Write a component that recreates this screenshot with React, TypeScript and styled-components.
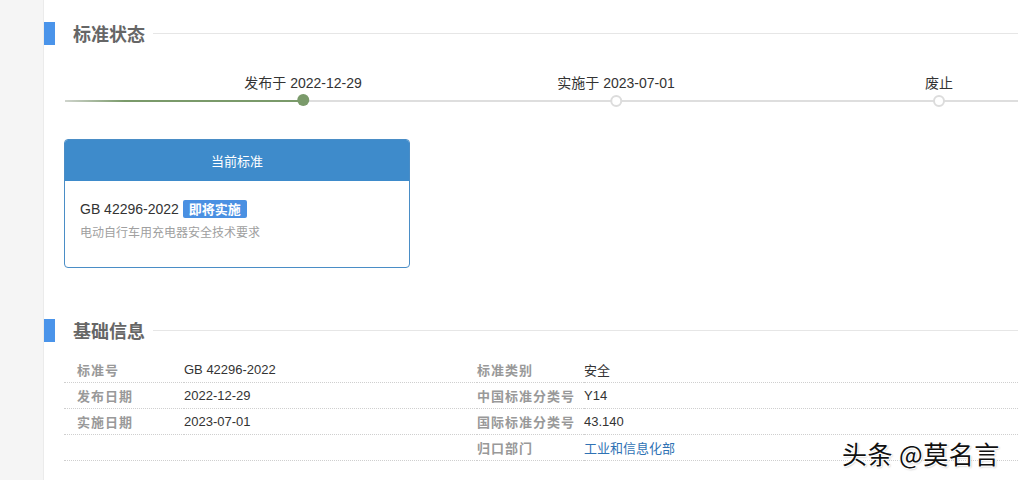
import React from 'react';
import styled, { createGlobalStyle } from 'styled-components';

const GlobalStyle = createGlobalStyle`
    html, body {
        margin: 0;
        padding: 0;
        background: #fff;
    }
    body {
        font-family: 'Liberation Sans', 'Noto Sans CJK SC', sans-serif;
        color: #333;
    }
`;

const Page = styled.div`
    display: flex;
    width: 1018px;
    height: 480px;
    overflow: hidden;
    position: relative;
`;

const Sidebar = styled.div`
    width: 43px;
    flex-shrink: 0;
    background: #f5f5f5;
    border-right: 1px solid #ebebeb;
`;

const Main = styled.div`
    flex: 1;
    min-width: 0;
    display: flex;
    flex-direction: column;
`;

const SectionHeader = styled.div<{ $top: number }>`
    display: flex;
    align-items: center;
    height: 23px;
    margin-top: ${(p) => p.$top}px;
`;

const SectionBar = styled.div`
    width: 11px;
    height: 23px;
    background: #4a94ea;
`;

const SectionTitle = styled.h2`
    margin: 0 0 0 18px;
    font-size: 18px;
    font-weight: 700;
    color: #666;
    font-family: 'Noto Sans CJK SC', sans-serif;
    line-height: 23px;
`;

const SectionLine = styled.div`
    flex: 1;
    height: 1px;
    background: #e6e6e6;
    margin-left: 8px;
`;

const Timeline = styled.div`
    position: relative;
    margin: 26px 0 0 20px;
    height: 40px;
`;

const Track = styled.div`
    position: absolute;
    left: 1px;
    right: 0;
    top: 29px;
    height: 2px;
    background: #dedede;
`;

const Progress = styled.div`
    position: absolute;
    left: 0;
    top: 0;
    height: 2px;
    background: linear-gradient(to right, rgba(122, 154, 106, 0.15), #7a9a6a 25%, #7a9a6a);
`;

const Node = styled.div`
    position: absolute;
    top: 0;
    display: flex;
    flex-direction: column;
    align-items: center;
    transform: translateX(-50%);
`;

const NodeLabel = styled.div`
    font-size: 14px;
    color: #333;
    line-height: 24px;
    white-space: nowrap;
    font-family: 'Liberation Sans', 'Noto Sans CJK SC', sans-serif;
`;

const Dot = styled.div<{ $done: boolean }>`
    margin-top: ${(p) => (p.$done ? '-1px' : '0')};
    width: ${(p) => (p.$done ? '12px' : '8px')};
    height: ${(p) => (p.$done ? '12px' : '8px')};
    border-radius: 50%;
    background: ${(p) => (p.$done ? '#7a9a6a' : '#fff')};
    border: ${(p) => (p.$done ? 'none' : '2px solid #dcdcdc')};
`;

const Card = styled.div`
    margin: 28px 0 0 20px;
    width: 346px;
    height: 129px;
    border: 1px solid #4a8dc6;
    border-radius: 4px;
    overflow: hidden;
    box-sizing: border-box;
`;

const CardHeader = styled.div`
    height: 41px;
    background: #3e8bcb;
    color: #fff;
    font-size: 13px;
    display: flex;
    align-items: center;
    justify-content: center;
    font-family: 'Noto Sans CJK SC', sans-serif;
`;

const CardBody = styled.div`
    padding: 18px 15px 0;
`;

const CodeRow = styled.div`
    display: flex;
    align-items: center;
    gap: 4px;
    font-size: 14px;
    color: #333;
    line-height: 20px;
`;

const Badge = styled.span`
    background: #4a90e2;
    color: #fff;
    font-size: 13px;
    font-weight: 700;
    padding: 0 6px;
    line-height: 18px;
    border-radius: 2px;
    font-family: 'Noto Sans CJK SC', sans-serif;
`;

const CardDesc = styled.div`
    margin-top: 4px;
    font-size: 12px;
    color: #a0a0a0;
    font-family: 'Noto Sans CJK SC', sans-serif;
`;

const InfoTable = styled.div`
    margin: 15px 0 0 20px;
    display: grid;
    grid-template-columns: 120px 293px 107px 1fr;
`;

const Cell = styled.div`
    height: 25px;
    border-bottom: 1px dotted #cfcfcf;
    display: flex;
    align-items: center;
    font-size: 13px;
    white-space: nowrap;
`;

const LabelCell = styled(Cell)<{ $pad: boolean }>`
    padding-left: ${(p) => (p.$pad ? '13px' : '0')};
    color: #999;
    font-weight: 700;
    letter-spacing: 1px;
    font-family: 'Noto Sans CJK SC', sans-serif;
`;

const ValueCell = styled(Cell)<{ $link?: boolean }>`
    font-size: 13px;
    color: ${(p) => (p.$link ? '#2f72b4' : '#333')};
    font-family: 'Liberation Sans', 'Noto Sans CJK SC', sans-serif;
`;

const Watermark = styled.div`
    position: absolute;
    left: 842px;
    top: 435px;
    font-size: 25px;
    color: #111;
    font-family: 'Noto Sans CJK SC', sans-serif;
    letter-spacing: 0.5px;
    text-shadow: 1px 1px 0 #fff, -1px -1px 0 #fff, 1px -1px 0 #fff, -1px 1px 0 #fff, 1px 1px 2px rgba(0, 0, 0, 0.4);
`;

const steps = [
    { label: '发布于 2022-12-29', left: 239, done: true },
    { label: '实施于 2023-07-01', left: 552, done: false },
    { label: '废止', left: 875, done: false },
];

const rows: [string, string, string, string, boolean?][] = [
    ['标准号', 'GB 42296-2022', '标准类别', '安全'],
    ['发布日期', '2022-12-29', '中国标准分类号', 'Y14'],
    ['实施日期', '2023-07-01', '国际标准分类号', '43.140'],
    ['', '', '归口部门', '工业和信息化部', true],
];

const App = () => {
    return (
        <>
            <GlobalStyle />
            <Page>
                <Sidebar />
                <Main>
                    <SectionHeader $top={22}>
                        <SectionBar />
                        <SectionTitle>标准状态</SectionTitle>
                        <SectionLine />
                    </SectionHeader>

                    <Timeline>
                        <Track>
                            <Progress style={{ width: steps[0].left }} />
                        </Track>
                        {steps.map((s) => (
                            <Node key={s.label} style={{ left: s.left }}>
                                <NodeLabel>{s.label}</NodeLabel>
                                <Dot $done={s.done} />
                            </Node>
                        ))}
                    </Timeline>

                    <Card>
                        <CardHeader>当前标准</CardHeader>
                        <CardBody>
                            <CodeRow>
                                GB 42296-2022 <Badge>即将实施</Badge>
                            </CodeRow>
                            <CardDesc>电动自行车用充电器安全技术要求</CardDesc>
                        </CardBody>
                    </Card>

                    <SectionHeader $top={51}>
                        <SectionBar />
                        <SectionTitle>基础信息</SectionTitle>
                        <SectionLine />
                    </SectionHeader>

                    <InfoTable>
                        {rows.map(([l1, v1, l2, v2, link]) => (
                            <React.Fragment key={l2}>
                                <LabelCell $pad>{l1}</LabelCell>
                                <ValueCell>{v1}</ValueCell>
                                <LabelCell $pad={false}>{l2}</LabelCell>
                                <ValueCell $link={link}>{v2}</ValueCell>
                            </React.Fragment>
                        ))}
                    </InfoTable>
                </Main>
                <Watermark>头条 @莫名言</Watermark>
            </Page>
        </>
    );
};

export default App;
